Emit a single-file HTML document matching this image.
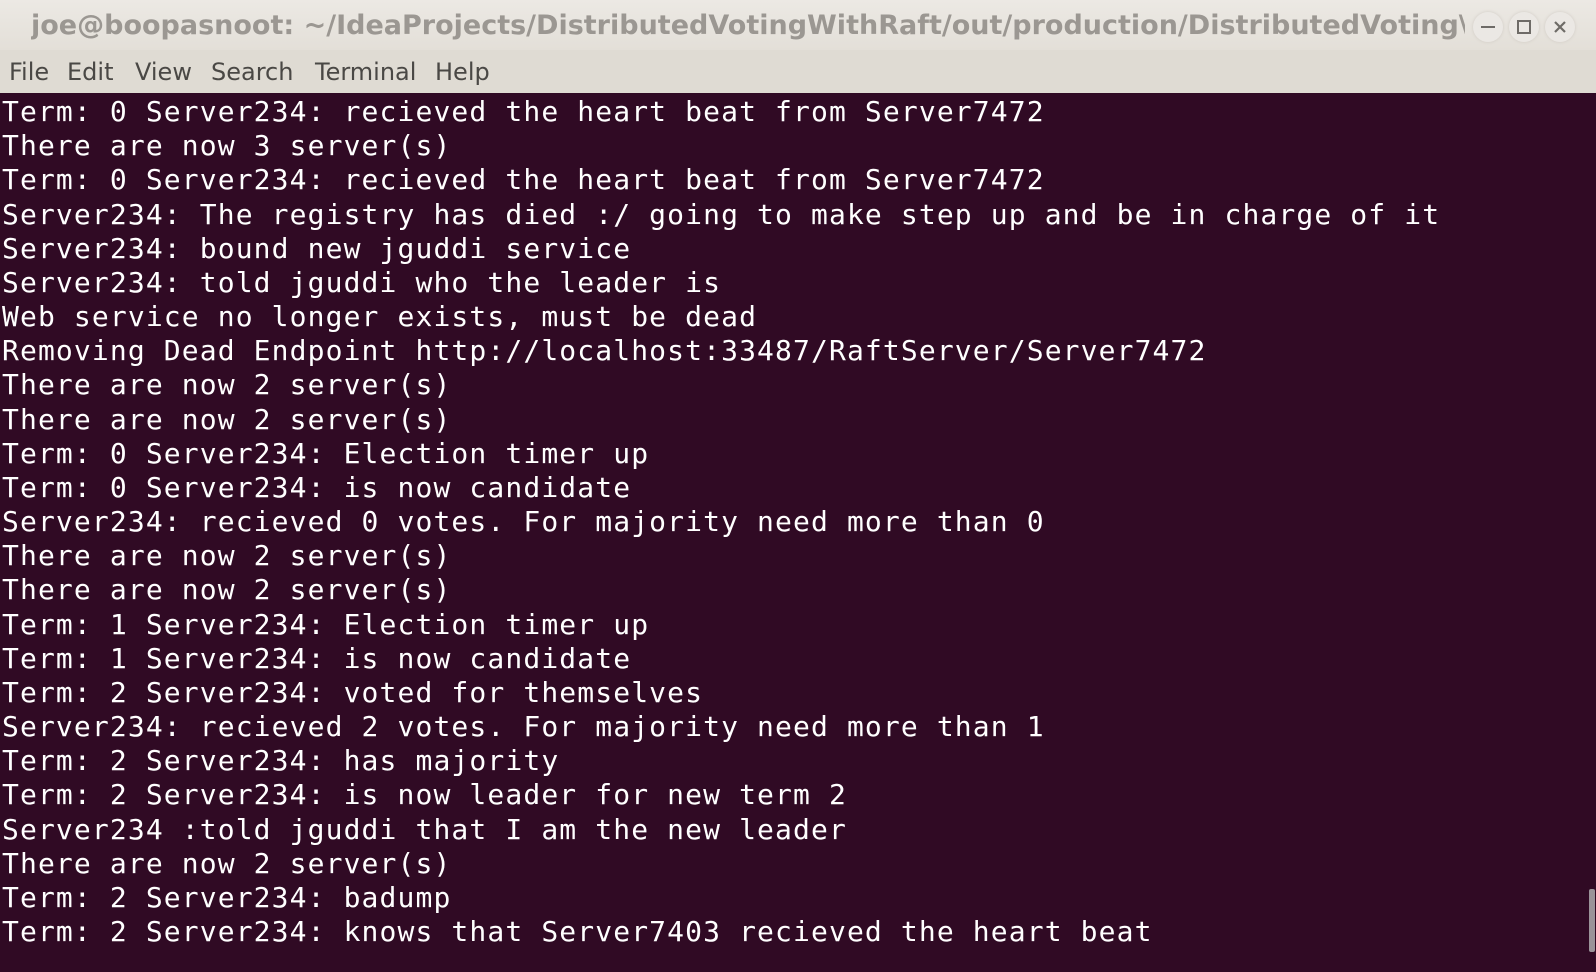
<!DOCTYPE html>
<html><head><meta charset="utf-8"><style>
html,body{margin:0;padding:0;width:1596px;height:972px;overflow:hidden;background:#300a24}
.title{position:absolute;left:0;top:0;width:1596px;height:50px;background:linear-gradient(#ece9e4,#e3dfd8);}
.title span{position:absolute;left:31px;top:10px;font:bold 27px "DejaVu Sans","Liberation Sans",sans-serif;color:#9b9792;white-space:nowrap;width:1434px;overflow:hidden}
.btn{position:absolute;top:12px;width:30px;height:30px;border-radius:50%;background:#ebe8e4;box-shadow:0 0 3px #cfcac3}
.menu{position:absolute;left:0;top:50px;width:1596px;height:43px;background:#dfdbd3;font:24px "DejaVu Sans","Liberation Sans",sans-serif;color:#4a4845}
.menu span{position:absolute;top:8px}
.term{position:absolute;left:2px;top:95px;font:28px "DejaVu Sans Mono","Liberation Mono",monospace;letter-spacing:1.12px;line-height:34.17px;color:#fff;white-space:pre;margin:0}
.sb{position:absolute;left:1589px;top:889px;width:6px;height:63px;background:#9a9399;border-radius:2px}
</style></head><body>
<div class="title"><span>joe@boopasnoot: ~/IdeaProjects/DistributedVotingWithRaft/out/production/DistributedVoting\</span>
<div class="btn" style="left:1473px"><div style="position:absolute;left:8px;top:14px;width:14px;height:2px;background:#6e6b67"></div></div>
<div class="btn" style="left:1509px"><div style="position:absolute;left:8px;top:8px;width:10px;height:10px;border:2px solid #6e6b67"></div></div>
<div class="btn" style="left:1545px"><svg width="30" height="30" style="position:absolute;left:0;top:0"><path d="M10 10L20 20M20 10L10 20" stroke="#6e6b67" stroke-width="2.2"/></svg></div>
</div>
<div class="menu"><span style="left:9px">File</span><span style="left:67px">Edit</span><span style="left:135px">View</span><span style="left:211px">Search</span><span style="left:315px">Terminal</span><span style="left:435px">Help</span></div>
<pre class="term">Term: 0 Server234: recieved the heart beat from Server7472
There are now 3 server(s)
Term: 0 Server234: recieved the heart beat from Server7472
Server234: The registry has died :/ going to make step up and be in charge of it
Server234: bound new jguddi service
Server234: told jguddi who the leader is
Web service no longer exists, must be dead
Removing Dead Endpoint http://localhost:33487/RaftServer/Server7472
There are now 2 server(s)
There are now 2 server(s)
Term: 0 Server234: Election timer up
Term: 0 Server234: is now candidate
Server234: recieved 0 votes. For majority need more than 0
There are now 2 server(s)
There are now 2 server(s)
Term: 1 Server234: Election timer up
Term: 1 Server234: is now candidate
Term: 2 Server234: voted for themselves
Server234: recieved 2 votes. For majority need more than 1
Term: 2 Server234: has majority
Term: 2 Server234: is now leader for new term 2
Server234 :told jguddi that I am the new leader
There are now 2 server(s)
Term: 2 Server234: badump
Term: 2 Server234: knows that Server7403 recieved the heart beat</pre>
<div class="sb"></div>
</body></html>
